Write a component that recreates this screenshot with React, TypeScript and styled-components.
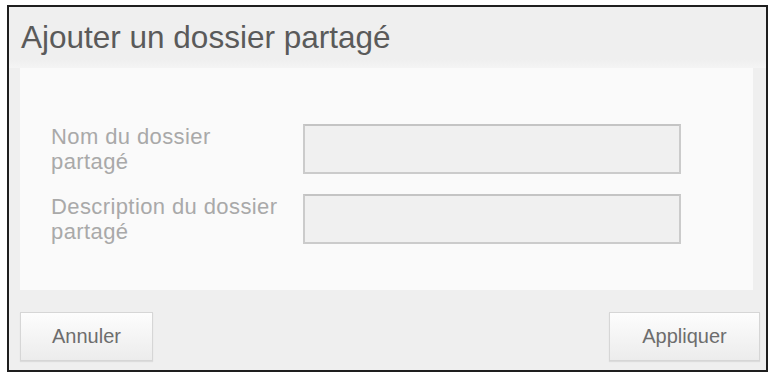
import styled, { createGlobalStyle } from "styled-components";

const GlobalStyle = createGlobalStyle`
  html, body {
    margin: 0;
    padding: 0;
    background: #ffffff;
  }
  body {
    font-family: "Liberation Sans", Arial, sans-serif;
  }
`;

const Page = styled.div`
  padding: 5px 0 0 7px;
`;

const Dialog = styled.div`
  box-sizing: border-box;
  width: 761px;
  height: 367px;
  border: 2px solid #1e1e1e;
  background: #efefef;
  display: flex;
  flex-direction: column;
`;

const Header = styled.div`
  height: 61px;
  display: flex;
  align-items: center;
  padding-left: 12px;
  background: linear-gradient(#efefef 85%, #f4f4f4);
`;

const Title = styled.h1`
  margin: 0;
  font-size: 31.5px;
  font-weight: 400;
  line-height: 1.15;
  color: #5a5a5a;
`;

const Body = styled.div`
  height: 222px;
  margin: 0 13px 0 11px;
  background: #fafafa;
  padding: 56px 0 0 31px;
  box-sizing: border-box;
  display: flex;
  flex-direction: column;
  gap: 20px;
`;

const Row = styled.div`
  display: flex;
  align-items: flex-start;
`;

const Label = styled.label`
  width: 252px;
  padding-top: 1px;
  font-size: 22px;
  line-height: 24.6px;
  letter-spacing: 0.4px;
  color: #a9a9a9;
`;

const Input = styled.input`
  box-sizing: border-box;
  width: 378px;
  height: 50px;
  margin: 0;
  border: 2px solid #cbcbcb;
  border-top-color: #c4c4c4;
  background: #f0f0f0;
  outline: none;
`;

const Footer = styled.div`
  flex: 1;
  display: flex;
  justify-content: space-between;
  align-items: flex-start;
  padding: 22px 6px 0 11px;
`;

const Button = styled.button<{ $wide?: boolean }>`
  box-sizing: border-box;
  width: ${(p) => (p.$wide ? "151px" : "133px")};
  height: 49px;
  margin: 0;
  padding: 0;
  border: 1px solid #d6d6d6;
  background: linear-gradient(#fdfdfd, #ececec);
  box-shadow: 0 1px 1px rgba(0, 0, 0, 0.08);
  font-family: "Liberation Sans", Arial, sans-serif;
  font-size: 20px;
  color: #6d6d6d;
  text-align: center;
`;

export default function App() {
  return (
    <>
      <GlobalStyle />
      <Page>
        <Dialog>
          <Header>
            <Title>Ajouter un dossier partagé</Title>
          </Header>
          <Body>
            <Row>
              <Label>
                Nom du dossier
                <br />
                partagé
              </Label>
              <Input type="text" />
            </Row>
            <Row>
              <Label>
                Description du dossier
                <br />
                partagé
              </Label>
              <Input type="text" />
            </Row>
          </Body>
          <Footer>
            <Button>Annuler</Button>
            <Button $wide>Appliquer</Button>
          </Footer>
        </Dialog>
      </Page>
    </>
  );
}
